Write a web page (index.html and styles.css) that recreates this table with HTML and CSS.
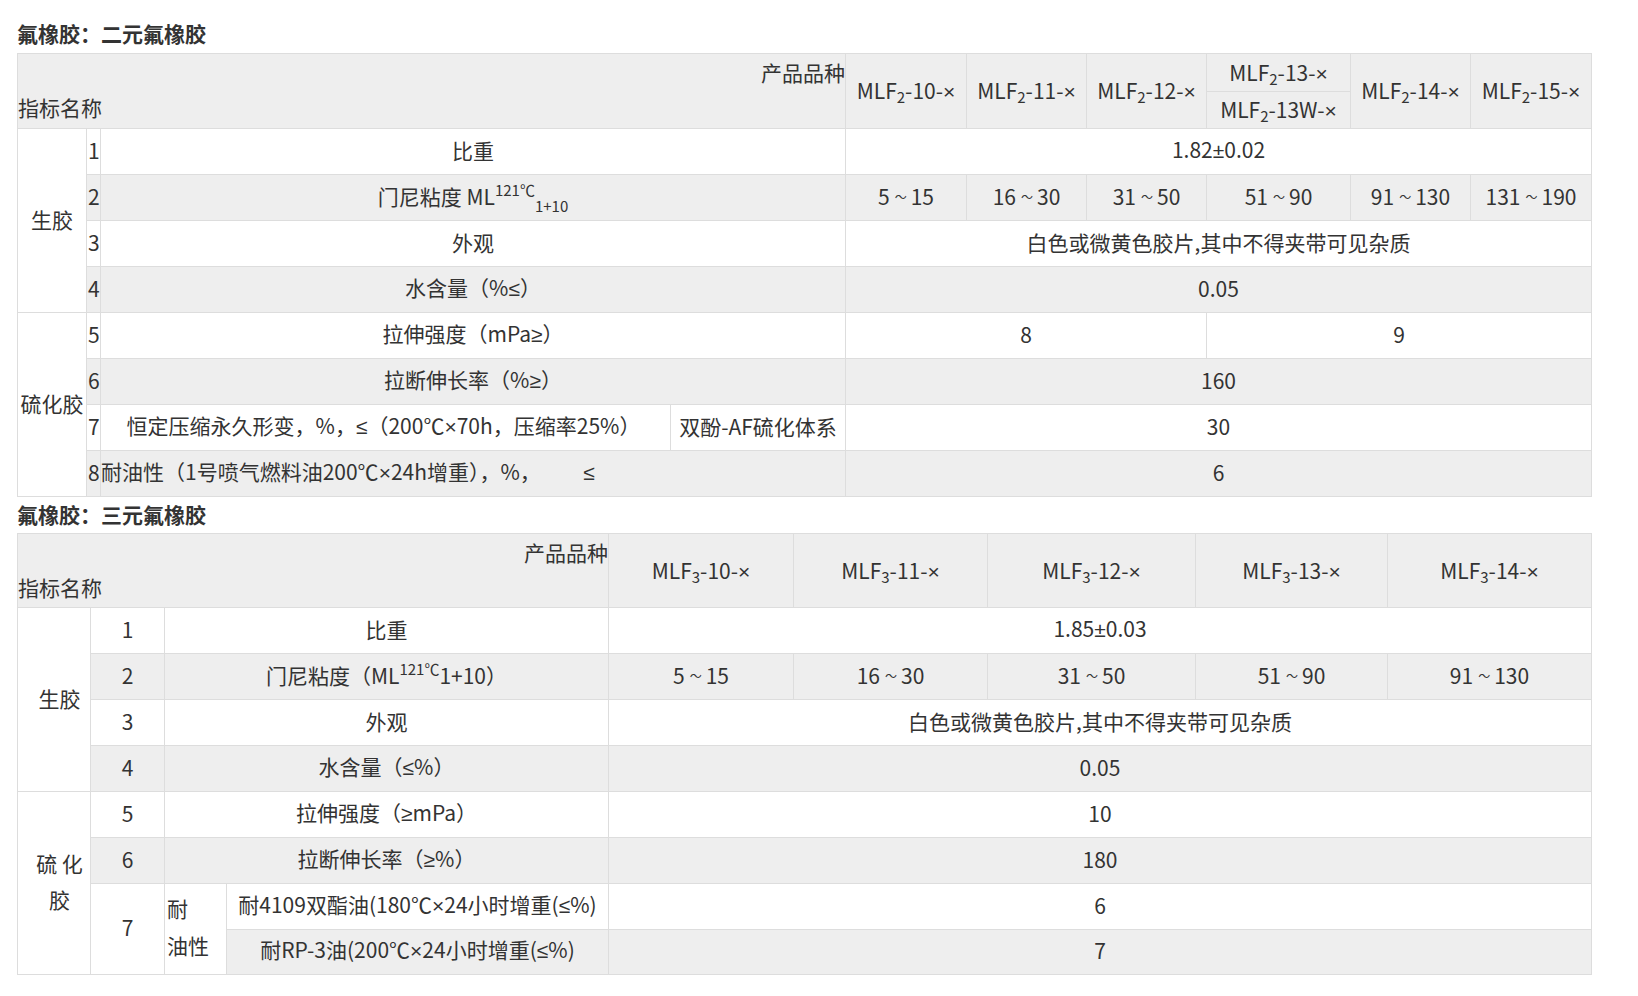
FILE: index.html
```html
<!DOCTYPE html>
<html lang="zh-CN">
<head>
<meta charset="utf-8">
<title>氟橡胶</title>
<link rel="stylesheet" href="styles.css">
</head>
<body>
<div class="page">
  <h2 class="sec-title">氟橡胶：二元氟橡胶</h2>
  <table class="spec spec-two">
    <colgroup>
      <col class="c1"><col class="c2"><col class="c3"><col class="c4"><col class="c5">
      <col class="c6"><col class="c7"><col class="c8"><col class="c9"><col class="c10">
    </colgroup>
    <tr class="hd hd-a">
      <td class="corner" rowspan="2" colspan="4"><div class="prod">产品品种</div><div class="name">指标名称</div></td>
      <td rowspan="2">MLF<sub>2</sub>-10-<span class="m">×</span></td>
      <td rowspan="2">MLF<sub>2</sub>-11-<span class="m">×</span></td>
      <td rowspan="2">MLF<sub>2</sub>-12-<span class="m">×</span></td>
      <td>MLF<sub>2</sub>-13-<span class="m">×</span></td>
      <td rowspan="2">MLF<sub>2</sub>-14-<span class="m">×</span></td>
      <td rowspan="2">MLF<sub>2</sub>-15-<span class="m">×</span></td>
    </tr>
    <tr class="hd hd-b">
      <td>MLF<sub>2</sub>-13W-<span class="m">×</span></td>
    </tr>
    <tr class="r">
      <td class="grp" rowspan="4">生胶</td>
      <td class="no">1</td>
      <td colspan="2">比重</td>
      <td colspan="6">1.82<span class="m">±</span>0.02</td>
    </tr>
    <tr class="r g">
      <td class="no">2</td>
      <td colspan="2">门尼粘度 ML<sup>121℃</sup><sub class="low">1+10</sub></td>
      <td>5<span class="tl">～</span>15</td><td>16<span class="tl">～</span>30</td><td>31<span class="tl">～</span>50</td><td>51<span class="tl">～</span>90</td><td>91<span class="tl">～</span>130</td><td>131<span class="tl">～</span>190</td>
    </tr>
    <tr class="r">
      <td class="no">3</td>
      <td colspan="2">外观</td>
      <td colspan="6">白色或微黄色胶片,其中不得夹带可见杂质</td>
    </tr>
    <tr class="r g">
      <td class="no">4</td>
      <td colspan="2">水含量（%<span class="m">≤</span>）</td>
      <td colspan="6">0.05</td>
    </tr>
    <tr class="r">
      <td class="grp" rowspan="4">硫化胶</td>
      <td class="no">5</td>
      <td colspan="2">拉伸强度（mPa<span class="m">≥</span>）</td>
      <td colspan="3">8</td>
      <td colspan="3">9</td>
    </tr>
    <tr class="r g">
      <td class="no">6</td>
      <td colspan="2">拉断伸长率（%<span class="m">≥</span>）</td>
      <td colspan="6">160</td>
    </tr>
    <tr class="r">
      <td class="no">7</td>
      <td class="shift">恒定压缩永久形变，%，<span class="m">≤</span>（200℃<span class="m">×</span>70h，压缩率25%）</td>
      <td>双酚-AF硫化体系</td>
      <td colspan="6">30</td>
    </tr>
    <tr class="r g">
      <td class="no">8</td>
      <td class="left" colspan="2">耐油性（1号喷气燃料油200℃<span class="m">×</span>24h增重），%，&nbsp;&nbsp;&nbsp;&nbsp;&nbsp;&nbsp;&nbsp;&nbsp;&nbsp;<span class="m">≤</span></td>
      <td colspan="6">6</td>
    </tr>
  </table>

  <h2 class="sec-title next">氟橡胶：三元氟橡胶</h2>
  <table class="spec spec-three">
    <colgroup>
      <col class="d1"><col class="d2"><col class="d3"><col class="d4"><col class="d5">
      <col class="d6"><col class="d7"><col class="d8"><col class="d9">
    </colgroup>
    <tr class="hd hd-one">
      <td class="corner" colspan="4"><div class="prod">产品品种</div><div class="name">指标名称</div></td>
      <td>MLF<sub>3</sub>-10-<span class="m">×</span></td>
      <td>MLF<sub>3</sub>-11-<span class="m">×</span></td>
      <td>MLF<sub>3</sub>-12-<span class="m">×</span></td>
      <td>MLF<sub>3</sub>-13-<span class="m">×</span></td>
      <td>MLF<sub>3</sub>-14-<span class="m">×</span></td>
    </tr>
    <tr class="r">
      <td class="grp grp3" rowspan="4">生胶</td>
      <td>1</td>
      <td colspan="2">比重</td>
      <td colspan="5">1.85<span class="m">±</span>0.03</td>
    </tr>
    <tr class="r g">
      <td>2</td>
      <td colspan="2">门尼粘度（ML<sup>121℃</sup>1+10）</td>
      <td>5<span class="tl">～</span>15</td><td>16<span class="tl">～</span>30</td><td>31<span class="tl">～</span>50</td><td>51<span class="tl">～</span>90</td><td>91<span class="tl">～</span>130</td>
    </tr>
    <tr class="r">
      <td>3</td>
      <td colspan="2">外观</td>
      <td colspan="5">白色或微黄色胶片,其中不得夹带可见杂质</td>
    </tr>
    <tr class="r g">
      <td>4</td>
      <td colspan="2">水含量（<span class="m">≤</span>%）</td>
      <td colspan="5">0.05</td>
    </tr>
    <tr class="r">
      <td class="grp grp3" rowspan="4">硫 化<br>胶</td>
      <td>5</td>
      <td colspan="2">拉伸强度（<span class="m">≥</span>mPa）</td>
      <td colspan="5">10</td>
    </tr>
    <tr class="r g">
      <td>6</td>
      <td colspan="2">拉断伸长率（<span class="m">≥</span>%）</td>
      <td colspan="5">180</td>
    </tr>
    <tr class="r">
      <td class="plain" rowspan="2">7</td>
      <td class="plain left oil" rowspan="2">耐<br>油性</td>
      <td>耐4109双酯油(180℃<span class="m">×</span>24小时增重(<span class="m">≤</span>%)</td>
      <td colspan="5">6</td>
    </tr>
    <tr class="r g last">
      <td>耐RP-3油(200℃<span class="m">×</span>24小时增重(<span class="m">≤</span>%)</td>
      <td colspan="5">7</td>
    </tr>
  </table>
</div>
</body>
</html>
```

FILE: styles.css
```css
html, body {
  margin: 0;
  padding: 0;
  background: #ffffff;
}

body {
  color: #333333;
  font-family: "Noto Sans CJK SC", "Microsoft YaHei", sans-serif;
  font-size: 21px;
}

.page {
  padding: 17px 0 30px 17px;
}

.sec-title {
  margin: 0;
  padding: 0 0 4px;
  font-size: 21px;
  font-weight: bold;
  line-height: 32px;
  color: #333333;
}

.sec-title.next {
  padding: 1px 0 3px;
}

.spec {
  border-collapse: collapse;
  table-layout: fixed;
  width: 1575px;
}

.spec td {
  border: 1px solid #dddddd;
  padding: 0 0 4px;
  line-height: 36px;
  text-align: center;
  vertical-align: middle;
  white-space: nowrap;
  background: #ffffff;
}

.spec .hd td,
.spec .g td {
  background: #eeeeee;
}

.spec td.grp,
.spec td.plain {
  background: #ffffff;
}

.m {
  font-family: "Liberation Sans", "DejaVu Sans", sans-serif;
}

.tl {
  display: inline-block;
  font-size: 12px;
  line-height: 12px;
  margin: 0 4px 0 5px;
  vertical-align: 3px;
}

.spec sub,
.spec sup {
  font-size: 15px;
  line-height: 0;
}

.spec sub {
  vertical-align: -4px;
}

.spec sub.low {
  vertical-align: -7px;
}

.spec sup {
  vertical-align: 9px;
}

.spec .r {
  height: 46px;
}

.spec .r.last {
  height: 45px;
}

.spec .hd-a {
  height: 38px;
}

.spec .hd-b {
  height: 37px;
}

.spec .hd td {
  line-height: 30px;
  padding: 0;
}

.spec .hd-one {
  height: 74px;
}

.spec .hd td.corner {
  padding: 0 0 2px;
  line-height: 35px;
}

.corner .prod {
  text-align: right;
}

.corner .name {
  text-align: left;
}

.spec td.no {
  text-align: left;
  padding-left: 1px;
}

.spec td.left {
  text-align: left;
  padding-left: 0;
}

.spec td.shift {
  padding-right: 4px;
}

.spec td.grp3 {
  padding-left: 14px;
  padding-right: 3px;
}

.spec td.oil {
  padding-left: 2px;
  line-height: 37px;
}

/* table 1 column widths */
.spec-two .c1 { width: 69px; }
.spec-two .c2 { width: 14px; }
.spec-two .c3 { width: 570px; }
.spec-two .c4 { width: 175px; }
.spec-two .c5 { width: 121px; }
.spec-two .c6 { width: 120px; }
.spec-two .c7 { width: 120px; }
.spec-two .c8 { width: 144px; }
.spec-two .c9 { width: 120px; }
.spec-two .c10 { width: 121px; }

/* table 2 column widths */
.spec-three .d1 { width: 73px; }
.spec-three .d2 { width: 74px; }
.spec-three .d3 { width: 62px; }
.spec-three .d4 { width: 382px; }
.spec-three .d5 { width: 185px; }
.spec-three .d6 { width: 194px; }
.spec-three .d7 { width: 208px; }
.spec-three .d8 { width: 192px; }
.spec-three .d9 { width: 204px; }
```
